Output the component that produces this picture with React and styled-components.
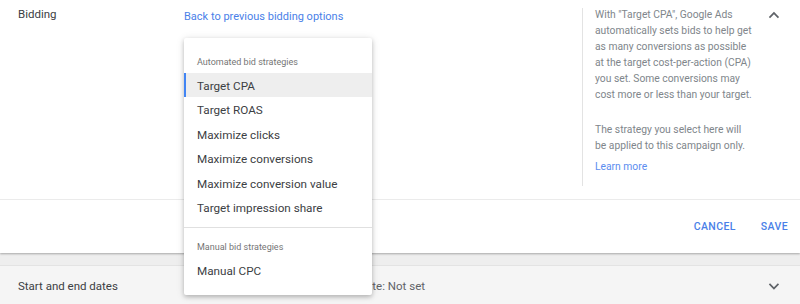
import React from "react";
import styled, { createGlobalStyle } from "styled-components";

const GlobalStyle = createGlobalStyle`
  body {
    margin: 0;
    background: #eeeeee;
    font-family: Roboto, "Liberation Sans", Arial, sans-serif;
    -webkit-font-smoothing: antialiased;
  }
`;

const strategies = [
  "Target CPA",
  "Target ROAS",
  "Maximize clicks",
  "Maximize conversions",
  "Maximize conversion value",
  "Target impression share",
];

const Chevron = ({ up }) => (
  <svg width="12" height="8" viewBox="0 0 12 8">
    <path
      d={up ? "M1.4 7.4 6 2.8l4.6 4.6L12 6 6 0 0 6z" : "M1.4 0.6 6 5.2l4.6-4.6L12 2 6 8 0 2z"}
      fill="#5f6368"
      transform="scale(0.85) translate(1 1)"
    />
  </svg>
);

const App = () => (
  <Page>
    <GlobalStyle />
    <Card>
      <Main>
        <Label>Bidding</Label>
        <Content>
          <Link>Back to previous bidding options</Link>
          <Menu>
            <GroupTitle>Automated bid strategies</GroupTitle>
            {strategies.map((s, i) => (
              <Item key={s} selected={i === 0}>
                {s}
              </Item>
            ))}
            <Divider />
            <GroupTitle second>Manual bid strategies</GroupTitle>
            <Item>Manual CPC</Item>
          </Menu>
        </Content>
        <Info>
          <p>
            With "Target CPA", Google Ads automatically sets bids to help get as many
            conversions as possible at the target cost-per-action (CPA) you set. Some
            conversions may cost more or less than your target.
          </p>
          <p>The strategy you select here will be applied to this campaign only.</p>
          <InfoLink>Learn more</InfoLink>
        </Info>
        <Toggle>
          <Chevron up />
        </Toggle>
      </Main>
      <Actions>
        <TextButton>Cancel</TextButton>
        <TextButton>Save</TextButton>
      </Actions>
    </Card>
    <Collapsed>
      <Label>Start and end dates</Label>
      <Summary>
        <span>Start date: October 28, 2019</span>
        <span>End date: Not set</span>
      </Summary>
      <Toggle down>
        <Chevron />
      </Toggle>
    </Collapsed>
  </Page>
);

export default App;

const Page = styled.div`
  width: 800px;
  height: 304px;
  overflow: hidden;
`;

const Card = styled.div`
  background: #fff;
  box-shadow: 0 1px 2px rgba(0, 0, 0, 0.3);
  margin-bottom: 12px;
`;

const Main = styled.div`
  display: grid;
  grid-template-columns: 184px 1fr 178px 40px;
  height: 200px;
  border-bottom: 1px solid #ebebeb;
  box-sizing: border-box;
`;

const Label = styled.div`
  padding: 6px 0 0 18px;
  font-size: 11.5px;
  line-height: 16px;
  color: #3c4043;
`;

const Content = styled.div`
  position: relative;
  padding-top: 5px;
`;

const Link = styled.a`
  font-size: 11px;
  line-height: 16px;
  color: #4a7fe8;
  cursor: pointer;
`;

const Menu = styled.div`
  position: absolute;
  left: 0;
  top: 38px;
  width: 188px;
  background: #fff;
  padding-bottom: 12px;
  box-shadow: 0 2px 4px rgba(0, 0, 0, 0.2), 0 1px 8px rgba(0, 0, 0, 0.12);
  border-radius: 2px;
  z-index: 2;
`;

const GroupTitle = styled.div`
  padding: ${(p) => (p.second ? "11px 0 3px" : "16px 0 3px")} 13px;
  font-size: 9px;
  line-height: 16px;
  color: #757575;
`;

const Item = styled.div`
  height: 24.4px;
  box-sizing: border-box;
  padding: 2px 0 0 13px;
  line-height: 22.4px;
  font-size: 11.7px;
  color: #3c4043;
  background: ${(p) => (p.selected ? "#eeeeee" : "transparent")};
  box-shadow: ${(p) => (p.selected ? "inset 2px 0 0 #4285f4" : "none")};
`;

const Divider = styled.div`
  height: 1px;
  background: #e0e0e0;
  margin-top: 8px;
`;

const Info = styled.div`
  margin: 8px 0 13px;
  border-left: 1px solid #e3e3e3;
  padding-left: 12px;
  font-size: 10.3px;
  line-height: 16px;
  color: #80868b;
  p {
    margin: -1px 0 19px;
    width: 158px;
  }
  p + p {
    margin: 0 0 5px;
  }
`;

const InfoLink = styled.a`
  color: #5b8def;
  cursor: pointer;
`;

const Toggle = styled.div`
  display: flex;
  justify-content: center;
  padding-top: ${(p) => (p.down ? "0" : "11px")};
  align-items: ${(p) => (p.down ? "center" : "flex-start")};
  margin-left: -13px;
`;

const Actions = styled.div`
  height: 53px;
  display: flex;
  justify-content: flex-end;
  align-items: center;
  gap: 25px;
  padding-right: 12px;
`;

const TextButton = styled.button`
  border: none;
  background: none;
  padding: 0;
  font-family: inherit;
  font-size: 10.5px;
  font-weight: 500;
  letter-spacing: 0.4px;
  text-transform: uppercase;
  color: #4a7fe8;
  cursor: pointer;
`;

const Collapsed = styled.div`
  display: grid;
  grid-template-columns: 184px 1fr 40px;
  align-items: center;
  height: 40px;
  background: #f5f5f5;
  border-top: 1px solid #e3e3e3;
  ${Label} {
    padding-top: 0;
  }
`;

const Summary = styled.div`
  display: flex;
  width: 241px;
  justify-content: space-between;
  white-space: nowrap;
  font-size: 11.5px;
  color: #5f6368;
`;
